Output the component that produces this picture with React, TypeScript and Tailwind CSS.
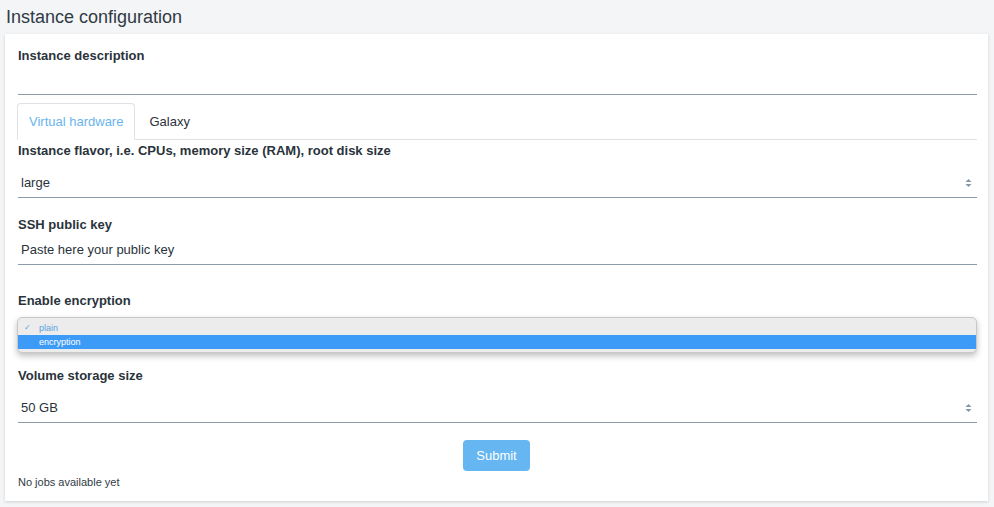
import React from "react";

const Arrows = () => (
  <svg width="7" height="10" viewBox="0 0 7 10" className="text-[#8796a5]">
    <path d="M3.5 1 L6.5 4 L0.5 4 Z" fill="currentColor" />
    <path d="M3.5 9 L6.5 6 L0.5 6 Z" fill="currentColor" />
  </svg>
);

const Label = ({ children }: { children: React.ReactNode }) => (
  <div className="text-[13px] leading-[16px] font-bold text-[#2a333b]">{children}</div>
);

const SelectLine = ({ value }: { value: string }) => (
  <div className="flex items-center justify-between h-[32px] pt-[3px] border-b border-[#8c9cab] pl-[3px] pr-[5px] text-[13px] text-[#2a333b]">
    <span>{value}</span>
    <Arrows />
  </div>
);

export default function App() {
  return (
    <div
      className="min-h-[507px] bg-[#f4f5f7]"
      style={{ fontFamily: '"Liberation Sans", Arial, sans-serif' }}
    >
      {/* Page title */}
      <div className="h-[34px] pl-[6px] pt-[6px] text-[18px] leading-[22px] text-[#2f3a44]">
        Instance configuration
      </div>

      {/* Card */}
      <div className="ml-[5px] w-[983px] h-[467px] bg-white shadow-[0_1px_3px_rgba(0,0,0,0.15)] pl-[13px] pr-[11px] pt-[14px]">
        <Label>Instance description</Label>
        <div className="h-[31px] border-b border-[#8c9cab]" />

        {/* Tabs */}
        <div className="mt-[8px] flex ml-[-1px] border-b border-[#dee2e6] h-[37px]">
          <div className="h-[37px] px-[11px] pt-[1px] flex items-center border border-[#dee2e6] border-b-white rounded-t-[4px] text-[13px] text-[#6ab4ec] bg-white">
            Virtual hardware
          </div>
          <div className="h-[36px] px-[14px] pt-[2px] flex items-center text-[13px] text-[#2a333b]">
            Galaxy
          </div>
        </div>

        <div className="mt-[3px]">
          <Label>Instance flavor, i.e. CPUs, memory size (RAM), root disk size</Label>
        </div>
        <div className="mt-[7px]">
          <SelectLine value="large" />
        </div>

        <div className="mt-[19px]">
          <Label>SSH public key</Label>
        </div>
        <div className="flex items-center h-[32px] pt-[3px] border-b border-[#8c9cab] pl-[3px] text-[13px] text-[#2a333b]">
          Paste here your public key
        </div>

        <div className="mt-[28px]">
          <Label>Enable encryption</Label>
        </div>

        {/* Opened native select list */}
        <div className="mt-[8px] ml-[-1px] h-[36px] rounded-[5px] border border-[#c8c8c8] bg-[#ececec] shadow-[0_3px_6px_rgba(0,0,0,0.25)] pt-[3px] text-[9px] leading-[14px]">
          <div className="h-[14px] flex items-center pl-[6px] text-[#5aa0e0]">
            <span className="w-[15px] text-[8px]">✓</span>
            <span>plain</span>
          </div>
          <div className="h-[14px] flex items-center pl-[21px] bg-[#3d9bf8] text-white">
            encryption
          </div>
        </div>

        <div className="mt-[15px]">
          <Label>Volume storage size</Label>
        </div>
        <div className="mt-[7px]">
          <SelectLine value="50 GB" />
        </div>

        <div className="mt-[17px] flex justify-center pr-[2px]">
          <button className="w-[67px] h-[31px] pt-[1px] rounded-[4px] bg-[#66b6f1] text-white text-[13px]">
            Submit
          </button>
        </div>

        <div className="mt-[4px] text-[11px] leading-[14px] text-[#2f3a44]">No jobs available yet</div>
      </div>
    </div>
  );
}
